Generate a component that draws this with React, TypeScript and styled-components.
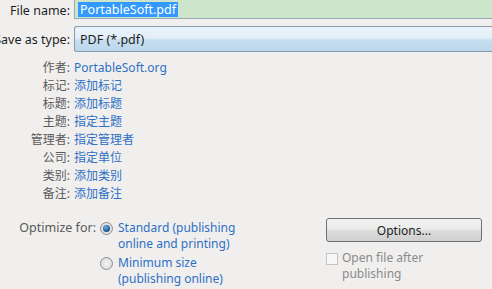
import styled, { createGlobalStyle } from "styled-components";

const GlobalStyle = createGlobalStyle`
  html, body {
    margin: 0;
    padding: 0;
    background: #f0efee;
  }
  body {
    font-family: "Noto Sans", "Noto Sans CJK SC", sans-serif;
    font-size: 12px;
    color: #3c3c3c;
    overflow: hidden;
  }
`;

const metaRows = [
  { label: "作者:", value: "PortableSoft.org" },
  { label: "标记:", value: "添加标记" },
  { label: "标题:", value: "添加标题" },
  { label: "主题:", value: "指定主题" },
  { label: "管理者:", value: "指定管理者" },
  { label: "公司:", value: "指定单位" },
  { label: "类别:", value: "添加类别" },
  { label: "备注:", value: "添加备注" },
];

const App = () => {
  return (
    <>
      <GlobalStyle />
      <Page>
        <FieldRow>
          <Label>File name:</Label>
          <NameInput>
            <Selected>PortableSoft.pdf</Selected>
          </NameInput>
        </FieldRow>
        <FieldRow>
          <Label>Save as type:</Label>
          <TypeSelect>PDF (*.pdf)</TypeSelect>
        </FieldRow>

        <MetaList>
          {metaRows.map((r) => (
            <MetaRow key={r.label}>
              <MetaLabel>{r.label}</MetaLabel>
              <MetaValue>{r.value}</MetaValue>
            </MetaRow>
          ))}
        </MetaList>

        <Bottom>
          <OptimizeLabel>Optimize for:</OptimizeLabel>
          <Radios>
            <RadioRow>
              <Radio $checked />
              <OptionText>
                Standard (publishing
                <br />
                online and printing)
              </OptionText>
            </RadioRow>
            <RadioRow>
              <Radio />
              <OptionText>
                Minimum size
                <br />
                (publishing online)
              </OptionText>
            </RadioRow>
          </Radios>
          <RightColumn>
            <OptionsButton>Options...</OptionsButton>
            <CheckRow>
              <Checkbox />
              <CheckText>
                Open file after
                <br />
                publishing
              </CheckText>
            </CheckRow>
          </RightColumn>
        </Bottom>
      </Page>
    </>
  );
};

export default App;

const Page = styled.div`
  display: flex;
  flex-direction: column;
  width: 492px;
  height: 289px;
`;

const FieldRow = styled.div`
  display: flex;
  align-items: center;
  gap: 4px;
  height: 20px;
  & + & {
    margin-top: 6px;
    height: 26px;
  }
`;

const Label = styled.div`
  width: 70px;
  flex: none;
  display: flex;
  justify-content: flex-end;
  white-space: nowrap;
  color: #1e1e1e;
  font-size: 12.5px;
`;

const NameInput = styled.div`
  flex: 1;
  height: 18px;
  margin-top: -2px;
  border: 1px solid #9aa9b6;
  border-right: none;
  background: #cde6cb;
  display: flex;
  align-items: center;
  padding-left: 3px;
`;

const Selected = styled.span`
  background: #3399ff;
  color: #ffffff;
  font-size: 12.5px;
  line-height: 15px;
  padding: 0 2px;
`;

const TypeSelect = styled.div`
  flex: 1;
  height: 24px;
  border: 1px solid #8a9aa8;
  border-right: none;
  border-radius: 3px 0 0 3px;
  background: linear-gradient(#eaf3fb 0%, #e3eef8 45%, #c6deef 55%, #bcd8ec 100%);
  display: flex;
  align-items: center;
  padding-left: 5px;
  color: #1e1e1e;
  font-size: 12.5px;
`;

const MetaList = styled.div`
  display: flex;
  flex-direction: column;
  margin-top: 6px;
`;

const MetaRow = styled.div`
  display: flex;
  align-items: center;
  gap: 4px;
  height: 18px;
`;

const MetaLabel = styled.div`
  width: 70px;
  text-align: right;
  color: #5a5a5a;
  font-size: 12px;
`;

const MetaValue = styled.div`
  color: #2e6fc4;
  font-size: 12px;
`;

const Bottom = styled.div`
  display: flex;
  margin-top: 18px;
`;

const OptimizeLabel = styled.div`
  width: 96px;
  text-align: right;
  color: #5a5a5a;
  font-size: 12.5px;
  line-height: 16px;
`;

const Radios = styled.div`
  display: flex;
  flex-direction: column;
  gap: 3px;
  margin-left: 4px;
`;

const RadioRow = styled.div`
  display: flex;
  gap: 5px;
`;

const Radio = styled.div<{ $checked?: boolean }>`
  width: 11px;
  height: 11px;
  margin-top: 2px;
  border-radius: 50%;
  border: 1px solid #8e8f8f;
  background: radial-gradient(circle, #f4f4f4 0%, #d6d6d6 100%);
  position: relative;
  &::after {
    content: "";
    display: ${(p) => (p.$checked ? "block" : "none")};
    position: absolute;
    left: 2px;
    top: 2px;
    width: 7px;
    height: 7px;
    border-radius: 50%;
    background: radial-gradient(circle at 40% 35%, #6fb3e8 0%, #1d5c95 60%, #173f66 100%);
  }
`;

const OptionText = styled.div`
  color: #2e6fc4;
  font-size: 12px;
  line-height: 16px;
`;

const RightColumn = styled.div`
  display: flex;
  flex-direction: column;
  margin-left: auto;
  margin-right: 10px;
  width: 156px;
  margin-top: -2px;
`;

const OptionsButton = styled.div`
  height: 22px;
  border: 1px solid #707070;
  border-radius: 3px;
  background: linear-gradient(#f2f2f2 0%, #ebebeb 50%, #dddddd 51%, #cfcfcf 100%);
  display: flex;
  align-items: center;
  justify-content: center;
  color: #1e1e1e;
  font-size: 12px;
`;

const CheckRow = styled.div`
  display: flex;
  gap: 4px;
  margin-top: 8px;
`;

const Checkbox = styled.div`
  width: 10px;
  height: 10px;
  margin-top: 3px;
  border: 1px solid #c4c4c4;
  background: #f7f7f7;
`;

const CheckText = styled.div`
  color: #8a8a8a;
  font-size: 12px;
  line-height: 16px;
`;
